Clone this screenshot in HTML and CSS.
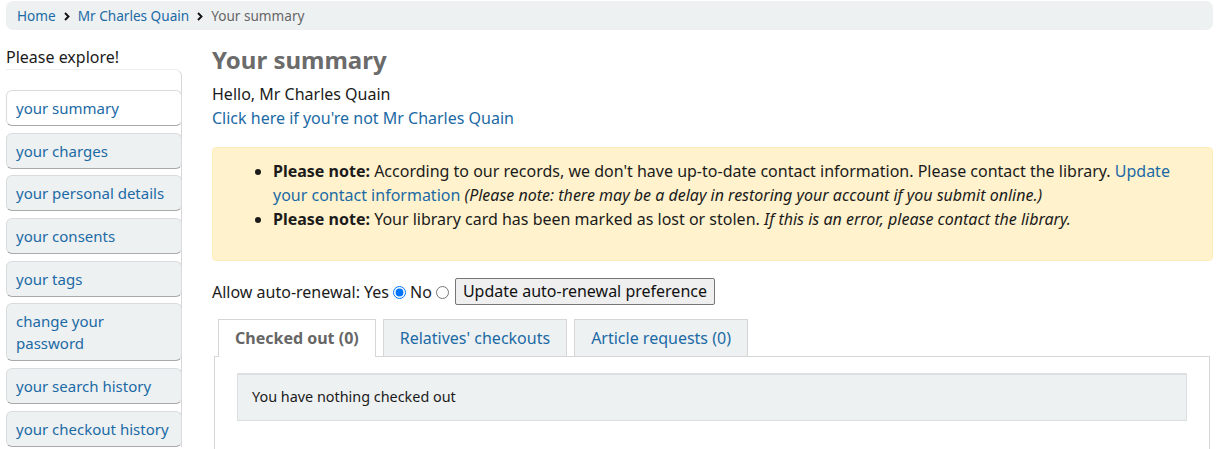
FILE: index.html
```html
<!DOCTYPE html>
<html lang="en">
<head>
<meta charset="utf-8">
<title>Your summary</title>
<link rel="stylesheet" href="styles.css">
</head>
<body>
<div class="page">
  <nav class="breadcrumb">
    <a href="#">Home</a>
    <svg class="chev" width="6" height="9" viewBox="0 0 6 9"><path d="M1 1 L4.5 4.5 L1 8" fill="none" stroke="#111" stroke-width="1.9"/></svg>
    <a href="#">Mr Charles Quain</a>
    <svg class="chev" width="6" height="9" viewBox="0 0 6 9"><path d="M1 1 L4.5 4.5 L1 8" fill="none" stroke="#111" stroke-width="1.9"/></svg>
    <span class="current">Your summary</span>
  </nav>
  <div class="layout">
    <aside class="sidebar">
      <div class="explore">Please explore!</div>
      <ul class="usermenu">
        <li class="active"><a href="#">your summary</a></li>
        <li><a href="#">your charges</a></li>
        <li><a href="#">your personal details</a></li>
        <li><a href="#">your consents</a></li>
        <li><a href="#">your tags</a></li>
        <li><a href="#">change your password</a></li>
        <li><a href="#">your search history</a></li>
        <li><a href="#">your checkout history</a></li>
      </ul>
    </aside>
    <main class="main">
      <h1 class="title">Your summary</h1>
      <p class="hello">Hello, Mr Charles Quain</p>
      <p class="notme"><a href="#">Click here if you're not Mr Charles Quain</a></p>
      <div class="alert">
        <ul>
          <li><strong>Please note:</strong> According to our records, we don't have up-to-date contact information. Please contact the library. <a href="#">Update your contact information</a> <em>(Please note: there may be a delay in restoring your account if you submit online.)</em></li>
          <li><strong>Please note:</strong> Your library card has been marked as lost or stolen. <em>If this is an error, please contact the library.</em></li>
        </ul>
      </div>
      <form class="renew">
        <span>Allow auto-renewal: Yes</span><input type="radio" name="ar" checked><span class="no">No</span><input type="radio" name="ar"><button type="button" class="btn">Update auto-renewal preference</button>
      </form>
      <div class="tabs">
        <ul class="tablist">
          <li class="tab active">Checked out (0)</li>
          <li class="tab"><a href="#">Relatives' checkouts</a></li>
          <li class="tab"><a href="#">Article requests (0)</a></li>
        </ul>
        <div class="panel">
          <div class="empty">You have nothing checked out</div>
        </div>
      </div>
    </main>
  </div>
</div>
</body>
</html>
```

FILE: styles.css
```css
* { box-sizing: border-box; }
html, body { margin: 0; padding: 0; background: #fff; }
body {
  font-family: "Noto Sans", "Open Sans", sans-serif;
  font-size: 16px;
  color: #1b1b1b;
  line-height: 24px;
}
a { color: #1b6aa5; text-decoration: none; }
.page { padding: 1px 12px 0 6px; }

.breadcrumb {
  display: flex;
  align-items: center;
  background: #eef1f2;
  border-radius: 7px;
  height: 29px;
  padding: 0 11px;
  font-size: 13.6px;
  line-height: 19px;
}
.breadcrumb .chev { margin: 1px 8px 0 8px; }
.breadcrumb .current { color: #666; }

.layout {
  display: flex;
  gap: 30px;
  margin-top: 15px;
}
.sidebar { width: 176px; flex: none; }
.explore { line-height: 24px; }
.usermenu {
  list-style: none;
  margin: 0;
  padding: 20px 0 0 0;
  border-right: 1px solid #d6d6d6;
  border-top-right-radius: 7px;
  border-top: 1px solid #eee;
  display: flex;
  flex-direction: column;
  gap: 6.7px;
}
.usermenu li {
  background: #eef1f2;
  border: 1px solid #d9dcde;
  border-bottom-color: #a9a9a9;
  border-radius: 6px;
  padding: 6px 9px;
  font-size: 15px;
  line-height: 22px;
  margin-right: -1px;
}
.usermenu li.active { background: #fff; }

.main { flex: 1; min-width: 0; }
.title {
  margin: 0;
  font-size: 24px;
  line-height: 30px;
  color: #6b6b6b;
  font-weight: 700;
}
.hello { margin: 7px 0 0; }
.notme { margin: 0 0 17px; }

.alert {
  background: #fff2cc;
  border: 1px solid #ffeebb;
  border-radius: 4px;
  padding: 11px 20px 13px;
  margin-bottom: 16px;
}
.alert ul { margin: 0 0 16px; padding-left: 40px; }
.alert li { line-height: 24px; }

.renew {
  display: flex;
  align-items: center;
  height: 29px;
}
.renew input { margin: 2px 3px 0 4px; width: 13px; height: 13px; }
.renew .no { margin-left: 1px; }
.btn {
  font-family: "Noto Sans", "Open Sans", sans-serif;
  font-size: 16px;
  line-height: 21px;
  height: 27px;
  padding: 2px 7px;
  color: #111;
  background: #efefef;
  border: 1px solid #767676;
  border-radius: 2px;
  margin-left: 3px;
}

.tabs { margin-top: 13px; padding-left: 2px; }
.tablist {
  list-style: none;
  margin: 0;
  padding: 0 0 0 4px;
  display: flex;
  gap: 7px;
  position: relative;
  z-index: 1;
}
.tab {
  border: 1px solid #d6d6d6;
  border-bottom: none;
  background: #eef1f2;
  padding: 6px 16px 6px;
  line-height: 24px;
  height: 37px;
}
.tab.active {
  background: #fff;
  color: #666;
  font-weight: 700;
  height: 38px;
  margin-bottom: -1px;
}
.panel {
  border: 1px solid #d6d6d6;
  border-bottom: none;
  margin-right: 3px;
  padding: 16px 22px 30px 22px;
}
.empty {
  background: #eef1f2;
  border: 1px solid #dcdfe2;
  border-top-width: 2px;
  padding: 11px 14px 12px;
  font-size: 14.4px;
  line-height: 22px;
}
```
